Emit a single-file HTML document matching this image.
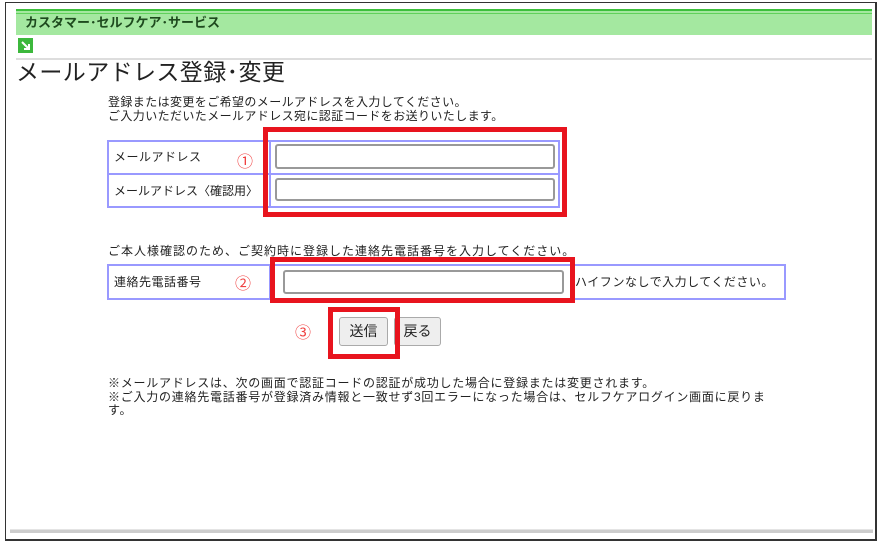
<!DOCTYPE html>
<html><head><meta charset="utf-8"><style>
*{margin:0;padding:0;box-sizing:border-box}
body{width:885px;height:549px;background:#fff;position:relative;overflow:hidden;font-family:"Liberation Sans","Noto Sans CJK JP",sans-serif;color:#222}
.a{position:absolute}
.t{font-size:12px;line-height:13.5px;white-space:nowrap;letter-spacing:0.5px}
.inp{position:absolute;border:2px solid #999;border-radius:3px;background:#fff}
.red{position:absolute;border:5px solid #e8141e}
.circ{position:absolute;color:#f04040;font-size:16px}
.btn{position:absolute;border:1px solid #aaa;border-radius:3px;background:#eee;font-size:14px;text-align:center;line-height:26px}
</style></head><body>
<div class="a" style="left:5px;top:2px;width:872px;height:539px;border:1.5px solid #333;border-right-width:2px;border-bottom-width:2px"></div>
<div class="a" style="left:16px;top:9px;width:856px;height:26px;background:#a4e8a0;border-top:2px solid #3cbf3c"></div>
<div class="a" style="left:16px;top:13px;width:856px;height:1px;background:#5fd15a"></div>
<div class="a t" style="left:25px;top:16px;font-size:13px;font-weight:bold;color:#1e4a1e;letter-spacing:0">カスタマー･セルフケア･サービス</div>
<div class="a" style="left:18px;top:38px;width:15px;height:15px;background:#3cb83c"></div>
<svg class="a" style="left:18px;top:38px" width="15" height="15"><path d="M4 4L11 11M11 6V11H6" stroke="#fff" stroke-width="2" fill="none"/></svg>
<div class="a" style="left:16px;top:58px;width:856px;height:2px;background:#ddd"></div>
<div class="a" style="left:16px;top:58px;font-size:23px;line-height:28px;color:#222;white-space:nowrap;letter-spacing:0.4px">メールアドレス登録･変更</div>
<div class="a t" style="left:108px;top:96px;letter-spacing:0.4px">登録または変更をご希望のメールアドレスを入力してください。<br>ご入力いただいたメールアドレス宛に認証コードをお送りいたします。</div>

<div class="a" style="left:107px;top:140px;width:453px;height:68px;border:2px solid #99f"></div>
<div class="a" style="left:107px;top:173px;width:453px;height:2px;background:#99f"></div>
<div class="a" style="left:269px;top:140px;width:2px;height:68px;background:#99f"></div>
<div class="a t" style="left:114px;top:151px">メールアドレス</div>
<div class="a t" style="left:114px;top:185px;letter-spacing:0">メールアドレス〈確認用〉</div>
<div class="circ" style="left:237px;top:148px">①</div>
<div class="inp" style="left:275px;top:144px;width:280px;height:25px"></div>
<div class="inp" style="left:275px;top:178px;width:280px;height:23px"></div>
<div class="red" style="left:263px;top:127px;width:304px;height:90px"></div>

<div class="a t" style="left:108px;top:245px;letter-spacing:1px">ご本人様確認のため、ご契約時に登録した連絡先電話番号を入力してください。</div>
<div class="a" style="left:107px;top:264px;width:679px;height:36px;border:2px solid #99f"></div>
<div class="a" style="left:269px;top:264px;width:2px;height:36px;background:#99f"></div>
<div class="a t" style="left:114px;top:276px">連絡先電話番号</div>
<div class="circ" style="left:235px;top:270px">②</div>
<div class="inp" style="left:283px;top:270px;width:281px;height:24px"></div>
<div class="a t" style="left:575px;top:276px">ハイフンなしで入力してください。</div>
<div class="red" style="left:270px;top:257px;width:305px;height:46px"></div>

<div class="circ" style="left:295px;top:319px">③</div>
<div class="btn" style="left:339px;top:317px;width:49px;height:29px">送信</div>
<div class="btn" style="left:394px;top:317px;width:47px;height:29px">戻る</div>
<div class="red" style="left:328px;top:307px;width:72px;height:52px"></div>

<div class="a t" style="left:108px;top:377px;letter-spacing:0.75px">※メールアドレスは、次の画面で認証コードの認証が成功した場合に登録または変更されます。<br>※ご入力の連絡先電話番号が登録済み情報と一致せず3回エラーになった場合は、セルフケアログイン画面に戻りま<br>す。</div>

<div class="a" style="left:10px;top:529px;width:863px;height:4px;background:#ccc;border-top:1px solid #e4e4e4"></div>
</body></html>
